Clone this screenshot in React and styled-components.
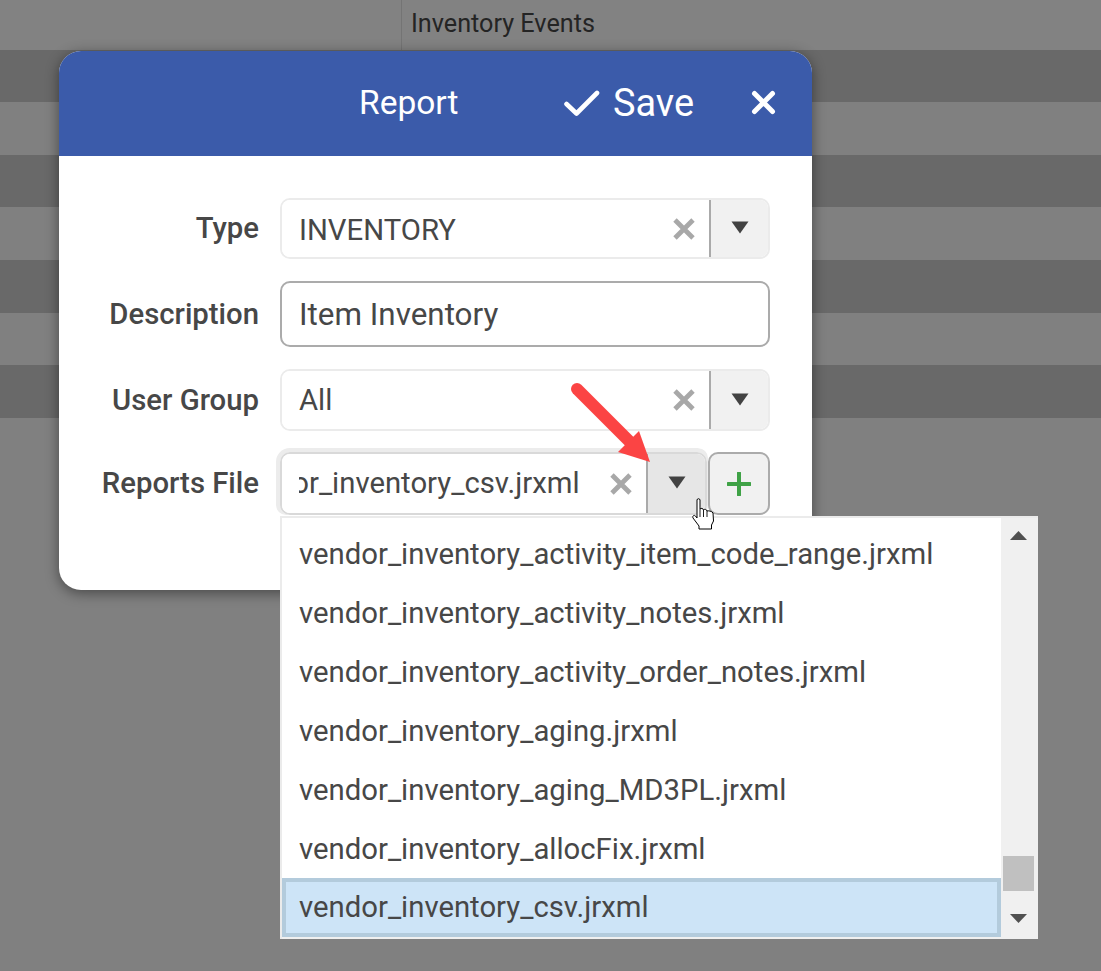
import React from "react";
import styled, { createGlobalStyle } from "styled-components";

const Global = createGlobalStyle`
  html, body { margin: 0; padding: 0; background: #808080; }
  body { font-family: Roboto, "Liberation Sans", sans-serif; }
  * { box-sizing: border-box; }
`;

const Page = styled.div`
  position: relative;
  width: 1101px;
  height: 971px;
  overflow: hidden;
  background: #808080;
`;

const GridHeader = styled.div`
  height: 50px;
  padding-left: 401px;
  background: #828282;
`;

const HeaderCell = styled.div`
  height: 50px;
  padding-left: 9px;
  border-left: 1px solid #747474;
  font-size: 25.2px;
  line-height: 48px;
  color: #242424;
`;

const GridRow = styled.div`
  height: ${(p) => p.$h}px;
  background: ${(p) => (p.$dark ? "#696969" : "#808080")};
`;

const Modal = styled.div`
  position: absolute;
  left: 59px;
  top: 51px;
  width: 753px;
  height: 539px;
  border-radius: 22px;
  background: #fff;
  box-shadow: 0 3px 14px rgba(0, 0, 0, 0.45);
`;

const ModalHead = styled.header`
  position: relative;
  height: 105px;
  border-radius: 22px 22px 0 0;
  background: #3b5baa;
  color: #fff;
`;

const Title = styled.div`
  position: absolute;
  left: 300px;
  top: 32px;
  font-size: 33.5px;
  line-height: 40px;
`;

const SaveButton = styled.div`
  position: absolute;
  left: 505px;
  top: 29px;
  display: flex;
  align-items: center;
  gap: 13px;
  font-size: 37.9px;
  line-height: 46px;
`;

const CloseButton = styled.svg`
  position: absolute;
  left: 692px;
  top: 39px;
  width: 25px;
  height: 25px;
`;

const Form = styled.div`
  display: flex;
  flex-direction: column;
  gap: 22px;
  padding: 42px 42px 0 0;
`;

const Row = styled.div`
  display: flex;
  align-items: center;
  height: ${(p) => p.$h}px;
  margin-top: ${(p) => p.$lift || 0}px;
`;

const Label = styled.label`
  width: 200px;
  margin: 0 21px 1px 0;
  text-align: right;
  font-size: 29.3px;
  font-weight: 500;
  color: #474747;
  white-space: nowrap;
`;

const Combo = styled.div`
  display: flex;
  flex: 1;
  height: 100%;
  min-width: 0;
  border: 2px solid #ebebeb;
  border-radius: 10px;
  overflow: hidden;
`;

const ComboText = styled.div`
  flex: 1;
  min-width: 0;
  padding-left: 17px;
  font-size: 29.3px;
  line-height: ${(p) => p.$lh || 59}px;
  color: #474747;
  white-space: nowrap;
  background: #fff;
`;

const ClearIcon = styled.svg`
  flex: none;
  align-self: center;
  width: 24px;
  height: 24px;
  margin-right: 13px;
`;

const ArrowBox = styled.div`
  flex: none;
  display: flex;
  align-items: center;
  justify-content: center;
  width: 59px;
  border-left: 2px solid #aaaaaa;
  background: ${(p) => (p.$hover ? "#e6e6e6" : "#f1f1f1")};
`;

const Arrow = styled.svg`
  width: 18px;
  height: 13px;
  margin-top: -2px;
`;

const TextInput = styled.div`
  flex: 1;
  height: 100%;
  padding-left: 17px;
  border: 2px solid #ababab;
  border-radius: 10px;
  font-size: 31.4px;
  line-height: 64px;
  color: #474747;
`;

const FileControls = styled.div`
  display: flex;
  flex: 1;
  height: 100%;
  min-width: 0;
`;

const FocusCombo = styled(Combo)`
  flex: none;
  width: 427px;
  border-color: #d9d9d9;
  box-shadow: 0 0 0 4px #ececec;
  clip-path: inset(-4px -1px 0 -4px round 10px);
`;

const ScrollClip = styled.div`
  overflow: hidden;
`;

const Scrolled = styled.span`
  display: block;
  margin-left: -69px;
`;

const AddButton = styled.div`
  display: flex;
  align-items: center;
  justify-content: center;
  width: 62px;
  height: 100%;
  margin-left: 1px;
  border: 2px solid #ababab;
  border-radius: 10px;
  background: #f1f1f1;
`;

const PlusIcon = styled.svg`
  width: 24px;
  height: 24px;
`;

const Dropdown = styled.div`
  position: absolute;
  left: 280px;
  top: 516px;
  width: 758px;
  height: 423px;
  display: flex;
  padding: 0 4px 2px 0;
  border-top: 2px solid #ebebeb;
  border-left: 2px solid #ebebeb;
  background: #f0f0f0;
`;

const List = styled.ul`
  flex: 1;
  margin: 0;
  padding: 6px 0 0;
  list-style: none;
  background: #fff;
`;

const Item = styled.li`
  height: 59px;
  padding-left: 17px;
  font-size: 29.3px;
  line-height: 61px;
  color: #474747;
  white-space: nowrap;
`;

const SelectedItem = styled(Item)`
  padding-left: 13px;
  border: 4px solid #b3cbdc;
  background: #cde4f7;
  line-height: 51px;
`;

const Track = styled.div`
  position: relative;
  flex: none;
  width: 33px;
  background: #f0f0f0;
`;

const Thumb = styled.div`
  position: absolute;
  left: 2px;
  top: 338px;
  width: 31px;
  height: 35px;
  background: #c0c0c0;
`;

const ScrollArrow = styled.svg`
  position: absolute;
  left: 9px;
  ${(p) => (p.$up ? "top: 13px;" : "bottom: 14px;")}
  width: 17px;
  height: 9px;
`;

const Callout = styled.svg`
  position: absolute;
  left: 560px;
  top: 375px;
  width: 100px;
  height: 100px;
`;

const Pointer = styled.svg`
  position: absolute;
  left: 692px;
  top: 498px;
  width: 22px;
  height: 32px;
`;

const Clear = () => (
  <ClearIcon viewBox="0 0 24 24">
    <path d="M3 3 L21 21 M21 3 L3 21" stroke="#a8a8a8" strokeWidth="4.8" />
  </ClearIcon>
);

const Down = () => (
  <Arrow viewBox="0 0 18 13">
    <path d="M0.5 0.5 H17.5 L9 12.5 Z" fill="#424242" />
  </Arrow>
);

const files = [
  "vendor_inventory_activity_item_code_range.jrxml",
  "vendor_inventory_activity_notes.jrxml",
  "vendor_inventory_activity_order_notes.jrxml",
  "vendor_inventory_aging.jrxml",
  "vendor_inventory_aging_MD3PL.jrxml",
  "vendor_inventory_allocFix.jrxml",
];

const rows = [
  [52, true],
  [53, false],
  [52, true],
  [53, false],
  [53, true],
  [52, false],
  [53, true],
];

export default function App() {
  return (
    <Page>
      <Global />
      <GridHeader>
        <HeaderCell>Inventory Events</HeaderCell>
      </GridHeader>
      {rows.map(([h, dark], i) => (
        <GridRow key={i} $h={h} $dark={dark} />
      ))}

      <Modal>
        <ModalHead>
          <Title>Report</Title>
          <SaveButton>
            <svg width="36" height="26" viewBox="0 0 36 26">
              <path d="M2.5 14 L12.5 23.5 L33 3" fill="none" stroke="#fff" strokeWidth="4.6" strokeLinecap="round" strokeLinejoin="round" />
            </svg>
            Save
          </SaveButton>
          <CloseButton viewBox="0 0 25 25">
            <path d="M3.5 3.5 L21.5 21.5 M21.5 3.5 L3.5 21.5" stroke="#fff" strokeWidth="5" strokeLinecap="round" />
          </CloseButton>
        </ModalHead>
        <Form>
          <Row $h={61}>
            <Label>Type</Label>
            <Combo>
              <ComboText $lh={61}>INVENTORY</ComboText>
              <Clear />
              <ArrowBox><Down /></ArrowBox>
            </Combo>
          </Row>
          <Row $h={66}>
            <Label>Description</Label>
            <TextInput>Item Inventory</TextInput>
          </Row>
          <Row $h={62}>
            <Label>User Group</Label>
            <Combo>
              <ComboText>All</ComboText>
              <Clear />
              <ArrowBox><Down /></ArrowBox>
            </Combo>
          </Row>
          <Row $h={63} $lift={-1}>
            <Label>Reports File</Label>
            <FileControls>
              <FocusCombo>
                <ComboText>
                  <ScrollClip><Scrolled>vendor_inventory_csv.jrxml</Scrolled></ScrollClip>
                </ComboText>
                <Clear />
                <ArrowBox $hover><Down /></ArrowBox>
              </FocusCombo>
              <AddButton>
                <PlusIcon viewBox="0 0 24 24">
                  <path d="M12 1 V23 M1 12 H23" stroke="#3fa246" strokeWidth="4" strokeLinecap="round" />
                </PlusIcon>
              </AddButton>
            </FileControls>
          </Row>
        </Form>
      </Modal>

      <Dropdown>
        <List>
          {files.map((f) => (
            <Item key={f}>{f}</Item>
          ))}
          <SelectedItem>vendor_inventory_csv.jrxml</SelectedItem>
        </List>
        <Track>
          <ScrollArrow $up viewBox="0 0 17 9">
            <path d="M0 9 H17 L8.5 0 Z" fill="#505050" />
          </ScrollArrow>
          <Thumb />
          <ScrollArrow viewBox="0 0 17 9">
            <path d="M0 0 H17 L8.5 9 Z" fill="#505050" />
          </ScrollArrow>
        </Track>
      </Dropdown>

      <Callout viewBox="0 0 100 100">
        <path d="M17 14 L70 67" stroke="#fb4444" strokeWidth="12" strokeLinecap="round" />
        <path d="M79 56 L90 87 L58 77 Z" fill="#fb4444" />
      </Callout>

      <Pointer viewBox="0 0 22 32">
        <path
          d="M5 2 C5 0.3 8 0.3 8 2 V11 C9 10 11 10 11.5 12 C12.5 11 14.5 11 15 13 C16 12.5 20 13 21 15 L21.5 23 L19.5 27 V31 H7 V28 L1 20 C0.2 18 2 16.5 3.5 18 L5 20 Z"
          fill="#fff"
          stroke="#000"
          strokeWidth="1"
        />
        <path d="M8 11 V19 M11.5 12 V19 M15 13 V19" stroke="#000" strokeWidth="0.9" fill="none" />
      </Pointer>
    </Page>
  );
}
